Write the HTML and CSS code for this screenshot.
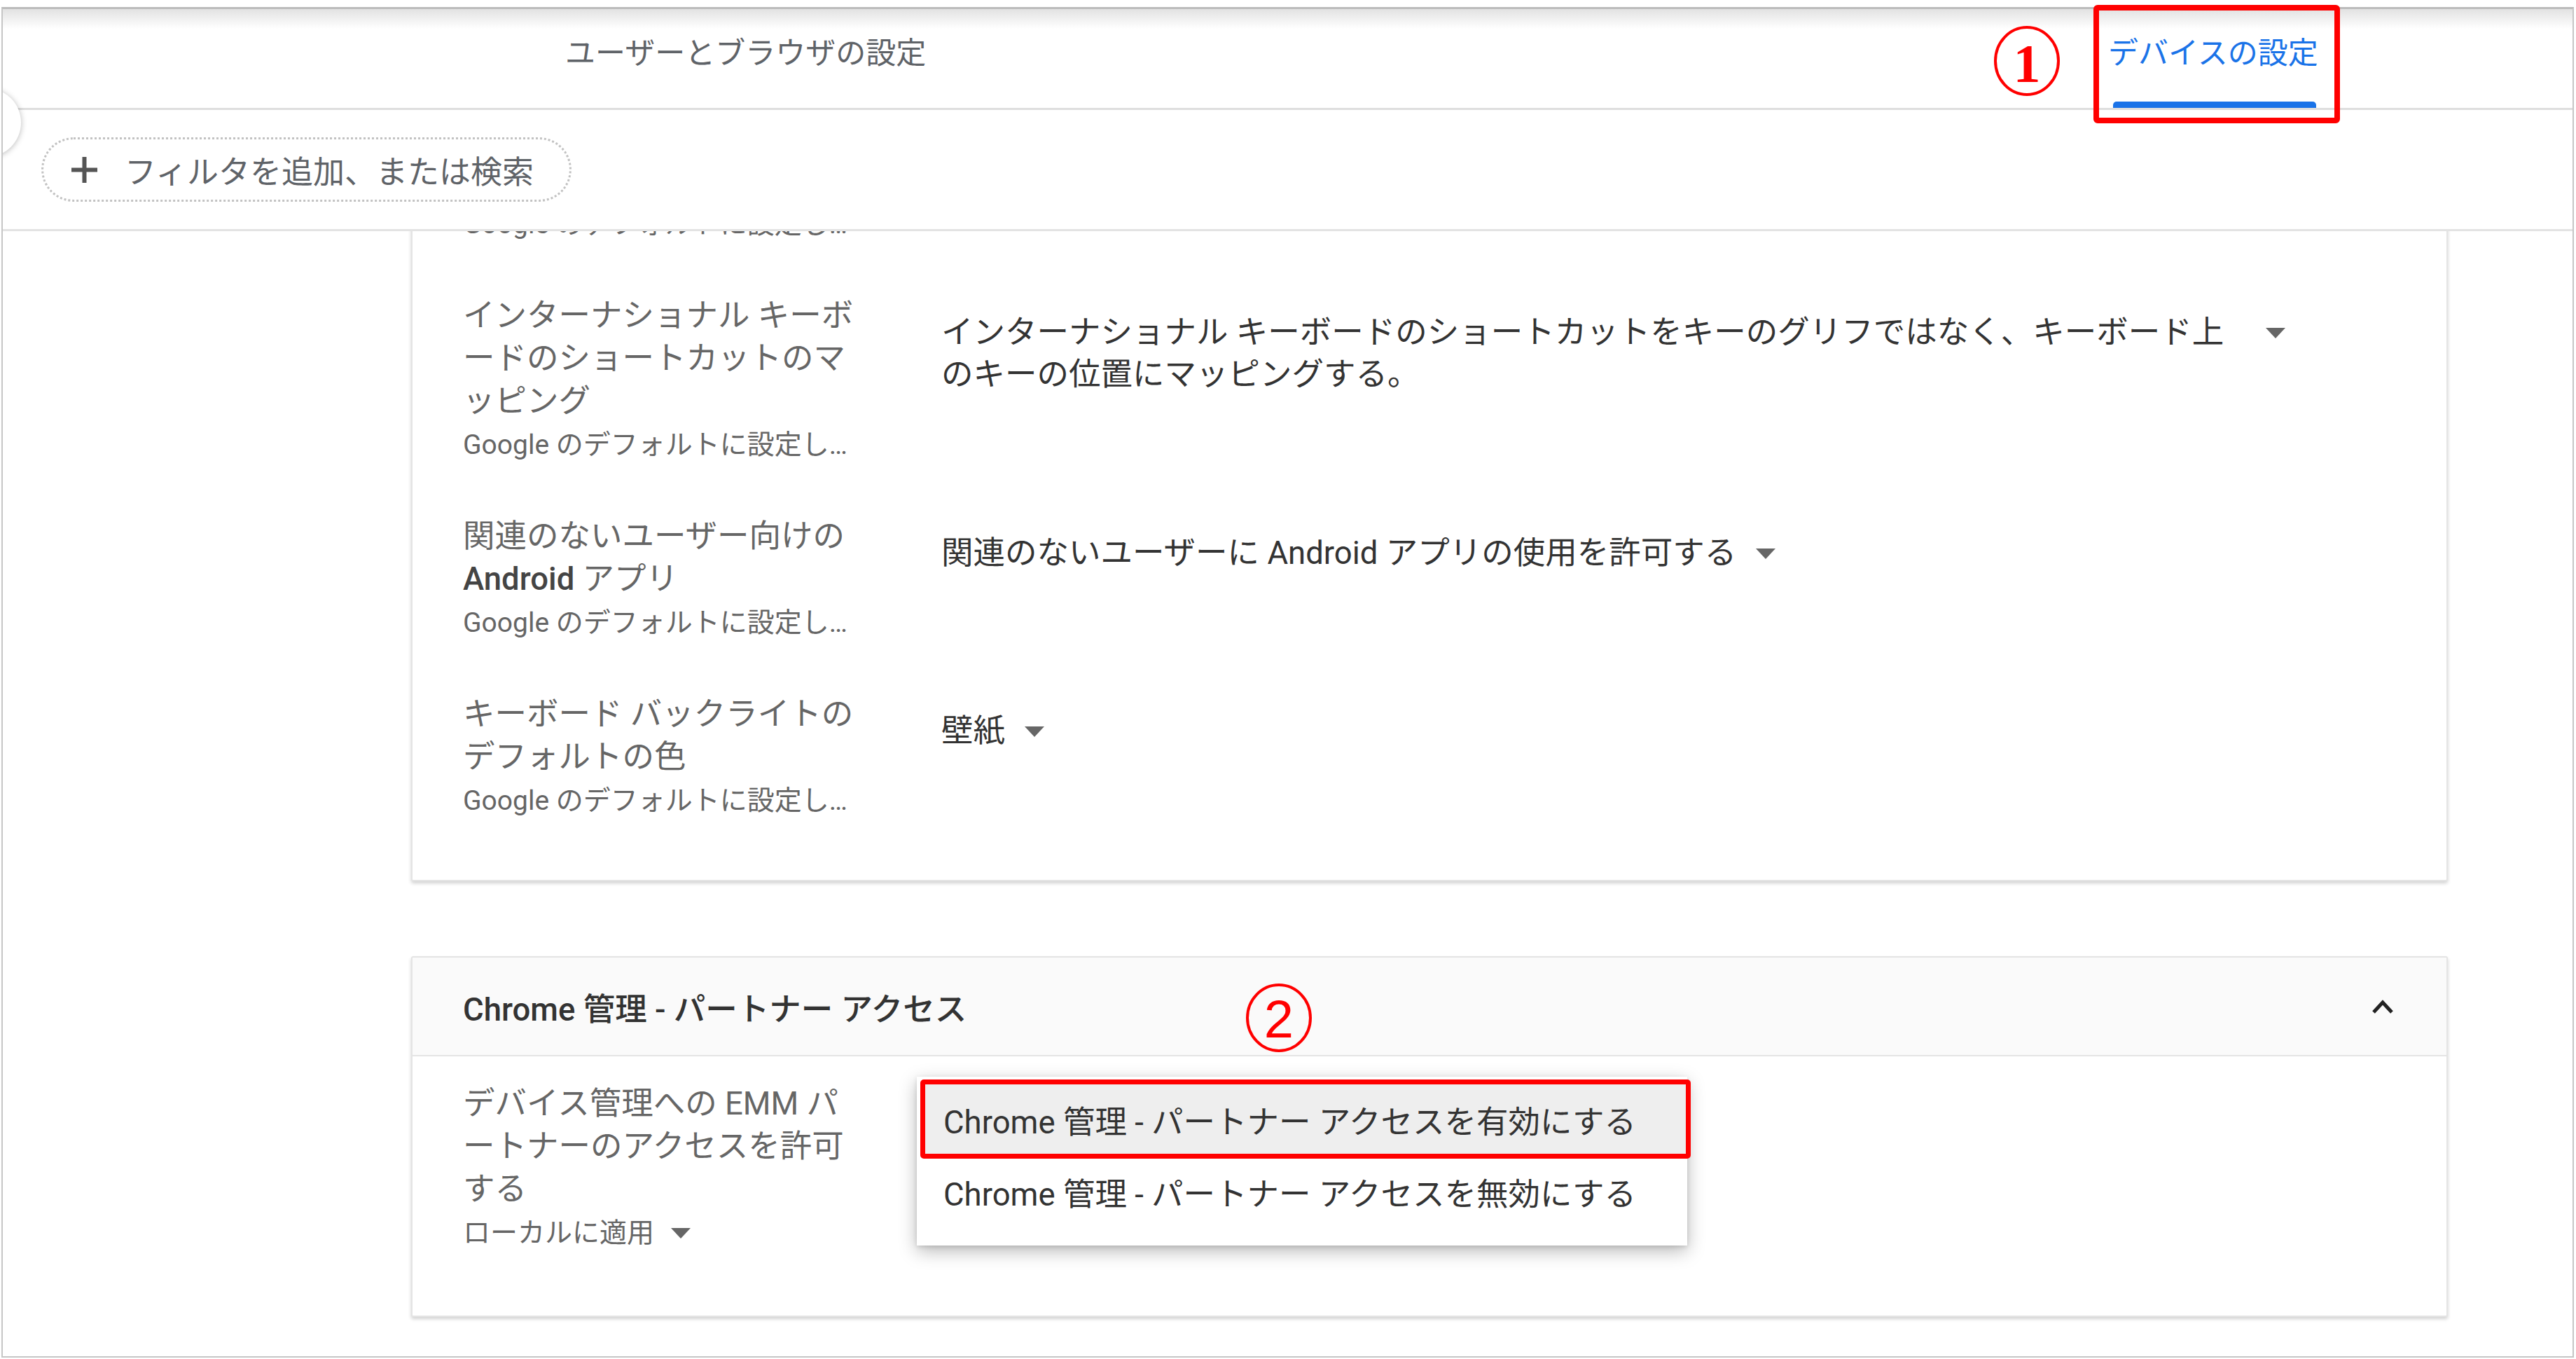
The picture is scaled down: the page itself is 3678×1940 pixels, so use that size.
FILE: index.html
```html
<!DOCTYPE html>
<html lang="ja">
  <head>
    <meta charset="utf-8">
    <title>デバイスの設定</title>
    <link rel="stylesheet" href="styles.css">
  </head>
  <body>
    <div class="page">
      <div class="frame">
        <div class="side-toggle"></div>

        <header class="tabs">
          <div class="tab"><span class="tab-label">ユーザーとブラウザの設定</span></div>
          <div class="tab tab-active">
            <span class="tab-label">デバイスの設定</span>
            <span class="tab-bar"></span>
          </div>
        </header>

        <div class="filter-bar">
          <div class="filter-chip">
            <svg width="41" height="41" viewBox="0 0 41 41"><path d="M20.5 2v37M2 20.5h37" stroke="#555" stroke-width="6" fill="none"/></svg>
            <span>フィルタを追加、または検索</span>
          </div>
        </div>

        <main class="content">
          <section class="card card-cut">
            <div class="sub cut-sub">Google のデフォルトに設定し…</div>

            <div class="row">
              <div class="label-col">
                <div class="label">インターナショナル キーボードのショートカットのマッピング</div>
                <div class="sub">Google のデフォルトに設定し…</div>
              </div>
              <div class="value value-long">
                <span class="value-text">インターナショナル キーボードのショートカットをキーのグリフではなく、キーボード上のキーの位置にマッピングする。</span>
                <span class="caret"></span>
              </div>
            </div>

            <div class="row">
              <div class="label-col">
                <div class="label">関連のないユーザー向けの <span class="em">Android</span> アプリ</div>
                <div class="sub">Google のデフォルトに設定し…</div>
              </div>
              <div class="value">
                <span class="value-text">関連のないユーザーに Android アプリの使用を許可する</span>
                <span class="caret"></span>
              </div>
            </div>

            <div class="row">
              <div class="label-col">
                <div class="label">キーボード バックライトのデフォルトの色</div>
                <div class="sub">Google のデフォルトに設定し…</div>
              </div>
              <div class="value">
                <span class="value-text">壁紙</span>
                <span class="caret"></span>
              </div>
            </div>
          </section>

          <section class="card card-access">
            <div class="card-head">
              <span>Chrome 管理 - パートナー アクセス</span>
              <svg width="32" height="20" viewBox="0 0 32 20"><polyline points="3,18 16,4 29,18" fill="none" stroke="#222" stroke-width="5"/></svg>
            </div>
            <div class="card-body">
              <div class="row">
                <div class="label-col">
                  <div class="label">デバイス管理への EMM パートナーのアクセスを許可する</div>
                  <div class="sub sub-select">ローカルに適用 <span class="caret"></span></div>
                </div>
                <div class="value"></div>
              </div>

              <div class="menu">
                <div class="menu-item menu-item-on">Chrome 管理 - パートナー アクセスを有効にする</div>
                <div class="menu-item">Chrome 管理 - パートナー アクセスを無効にする</div>
              </div>
            </div>
          </section>
        </main>
      </div>

      <!-- annotations -->
      <div class="mark-box"></div>
      <svg class="mark-num num-1" viewBox="0 0 96 100">
        <ellipse cx="48" cy="50" rx="45" ry="48" fill="none" stroke="#f00" stroke-width="4"/>
        <text x="48" y="80" text-anchor="middle" font-family="Liberation Serif" font-weight="bold" font-size="78" fill="#f00">1</text>
      </svg>
      <svg class="mark-num num-2" viewBox="0 0 96 100">
        <ellipse cx="48" cy="50" rx="45" ry="47" fill="none" stroke="#f00" stroke-width="4"/>
        <text x="48" y="78" text-anchor="middle" font-family="Liberation Sans" font-size="76" fill="#f00">2</text>
      </svg>
    </div>
  </body>
</html>
```

FILE: styles.css
```css
body {
  margin: 0;
  background: #fff;
  font-family: Roboto, "Noto Sans CJK JP", sans-serif;
}
.page {
  position: relative;
  width: 3678px;
  height: 1940px;
  overflow: hidden;
}
.frame {
  position: relative;
  box-sizing: border-box;
  height: 1928px;
  margin: 10px 3px 0 2px;
  border: 2px solid #c6c6c6;
  border-top: 3px solid #bcbcbc;
  display: flex;
  flex-direction: column;
  overflow: hidden;
  background: #fff;
}
.side-toggle {
  position: absolute;
  left: -72px;
  top: 113px;
  width: 98px;
  height: 98px;
  border-radius: 50%;
  background: #fff;
  box-shadow: 0 1px 8px rgba(0,0,0,.28);
  z-index: 2;
}

/* tabs */
.tabs {
  flex: none;
  display: grid;
  grid-template-columns: 2203px auto;
  justify-items: start;
  height: 141px;
  padding-left: 803px;
  border-bottom: 3px solid #dedede;
  background: linear-gradient(#e2e2e2, #fff 28px);
}
.tab {
  display: flex;
  flex-direction: column;
  height: 141px;
}
.tab-label {
  padding-top: 41px;
  font-size: 43px;
  line-height: 44px;
  color: #5f6368;
  white-space: nowrap;
}
.tab-active .tab-label { color: #1a73e8; }
.tab-bar {
  margin: auto 3px 0 7px;
  height: 9px;
  background: #1a73e8;
  border-radius: 5px 5px 0 0;
}

/* filter */
.filter-bar {
  flex: none;
  display: flex;
  align-items: center;
  height: 170px;
  padding-left: 55px;
  border-bottom: 3px solid #e3e3e3;
}
.filter-chip {
  box-sizing: border-box;
  display: flex;
  align-items: center;
  gap: 37px;
  width: 757px;
  height: 92px;
  padding-left: 38px;
  border: 3px dotted #c2c2c2;
  border-radius: 46px;
  font-size: 45px;
  color: #5f6368;
}

/* content */
.content {
  flex: 1;
  min-height: 0;
  overflow: hidden;
  padding-left: 583px;
}
.card {
  box-sizing: border-box;
  width: 2908px;
  background: #fff;
  border: 2px solid #e4e4e4;
  border-radius: 3px;
  box-shadow: 0 3px 5px rgba(0,0,0,.18);
}
.card-cut {
  margin-top: -42px;
  border-top: none;
  padding-bottom: 81px;
}
.cut-sub { margin-left: 72px; }
.row {
  display: grid;
  grid-template-columns: 575px 1fr;
  column-gap: 108px;
  margin-top: 68px;
  padding: 0 72px;
}
.label {
  max-width: 575px;
  font-size: 45.5px;
  line-height: 61px;
  color: #666;
}
.label .em {
  font-weight: 500;
  color: #444;
}
.sub {
  font-size: 39px;
  line-height: 64px;
  color: #666;
  white-space: nowrap;
}
.value {
  display: flex;
  align-items: flex-start;
  padding-top: 25px;
  font-size: 45.5px;
  line-height: 60px;
  color: #333;
}
.value-text { max-width: 1850px; }
.caret {
  flex: none;
  width: 0;
  height: 0;
  margin: 23px 0 0 28px;
  border-left: 14px solid transparent;
  border-right: 14px solid transparent;
  border-top: 15px solid #666;
}
.value-long .caret { margin-left: 41px; }

/* partner access card */
.card-access { margin-top: 107px; }
.card-head {
  box-sizing: border-box;
  display: flex;
  align-items: center;
  justify-content: space-between;
  height: 141px;
  padding: 0 75px 0 72px;
  background: #fafafa;
  border-bottom: 2px solid #e4e4e4;
  font-size: 45.5px;
  font-weight: 500;
  color: #333;
}
.card-body {
  position: relative;
  padding: 37px 0 86px;
}
.card-body .row { margin-top: 0; }
.sub-select {
  display: flex;
  align-items: center;
}
.sub-select .caret { margin: 0 0 0 24px; }

.menu {
  position: absolute;
  left: 720px;
  top: 29px;
  width: 1100px;
  padding: 4px 0 30px;
  background: #fff;
  box-shadow: 0 8px 24px rgba(0,0,0,.28), 0 2px 6px rgba(0,0,0,.12);
  z-index: 1;
}
.menu-item {
  display: flex;
  align-items: center;
  height: 94px;
  padding-left: 38px;
  font-size: 45.5px;
  color: #333;
  white-space: nowrap;
}
.menu-item-on {
  box-sizing: border-box;
  height: 113px;
  margin: 0 -5px 0 5px;
  padding-left: 26px;
  background: #eee;
  border: 7px solid #f00;
  border-radius: 5px;
}

/* red annotations */
.mark-box {
  position: absolute;
  left: 2989px;
  top: 7px;
  box-sizing: border-box;
  width: 352px;
  height: 169px;
  border: 8px solid #f00;
  border-radius: 6px;
}
.mark-num {
  position: absolute;
  width: 96px;
  height: 100px;
}
.num-1 { left: 2846px; top: 37px; }
.num-2 { left: 1778px; top: 1403px; }
```
